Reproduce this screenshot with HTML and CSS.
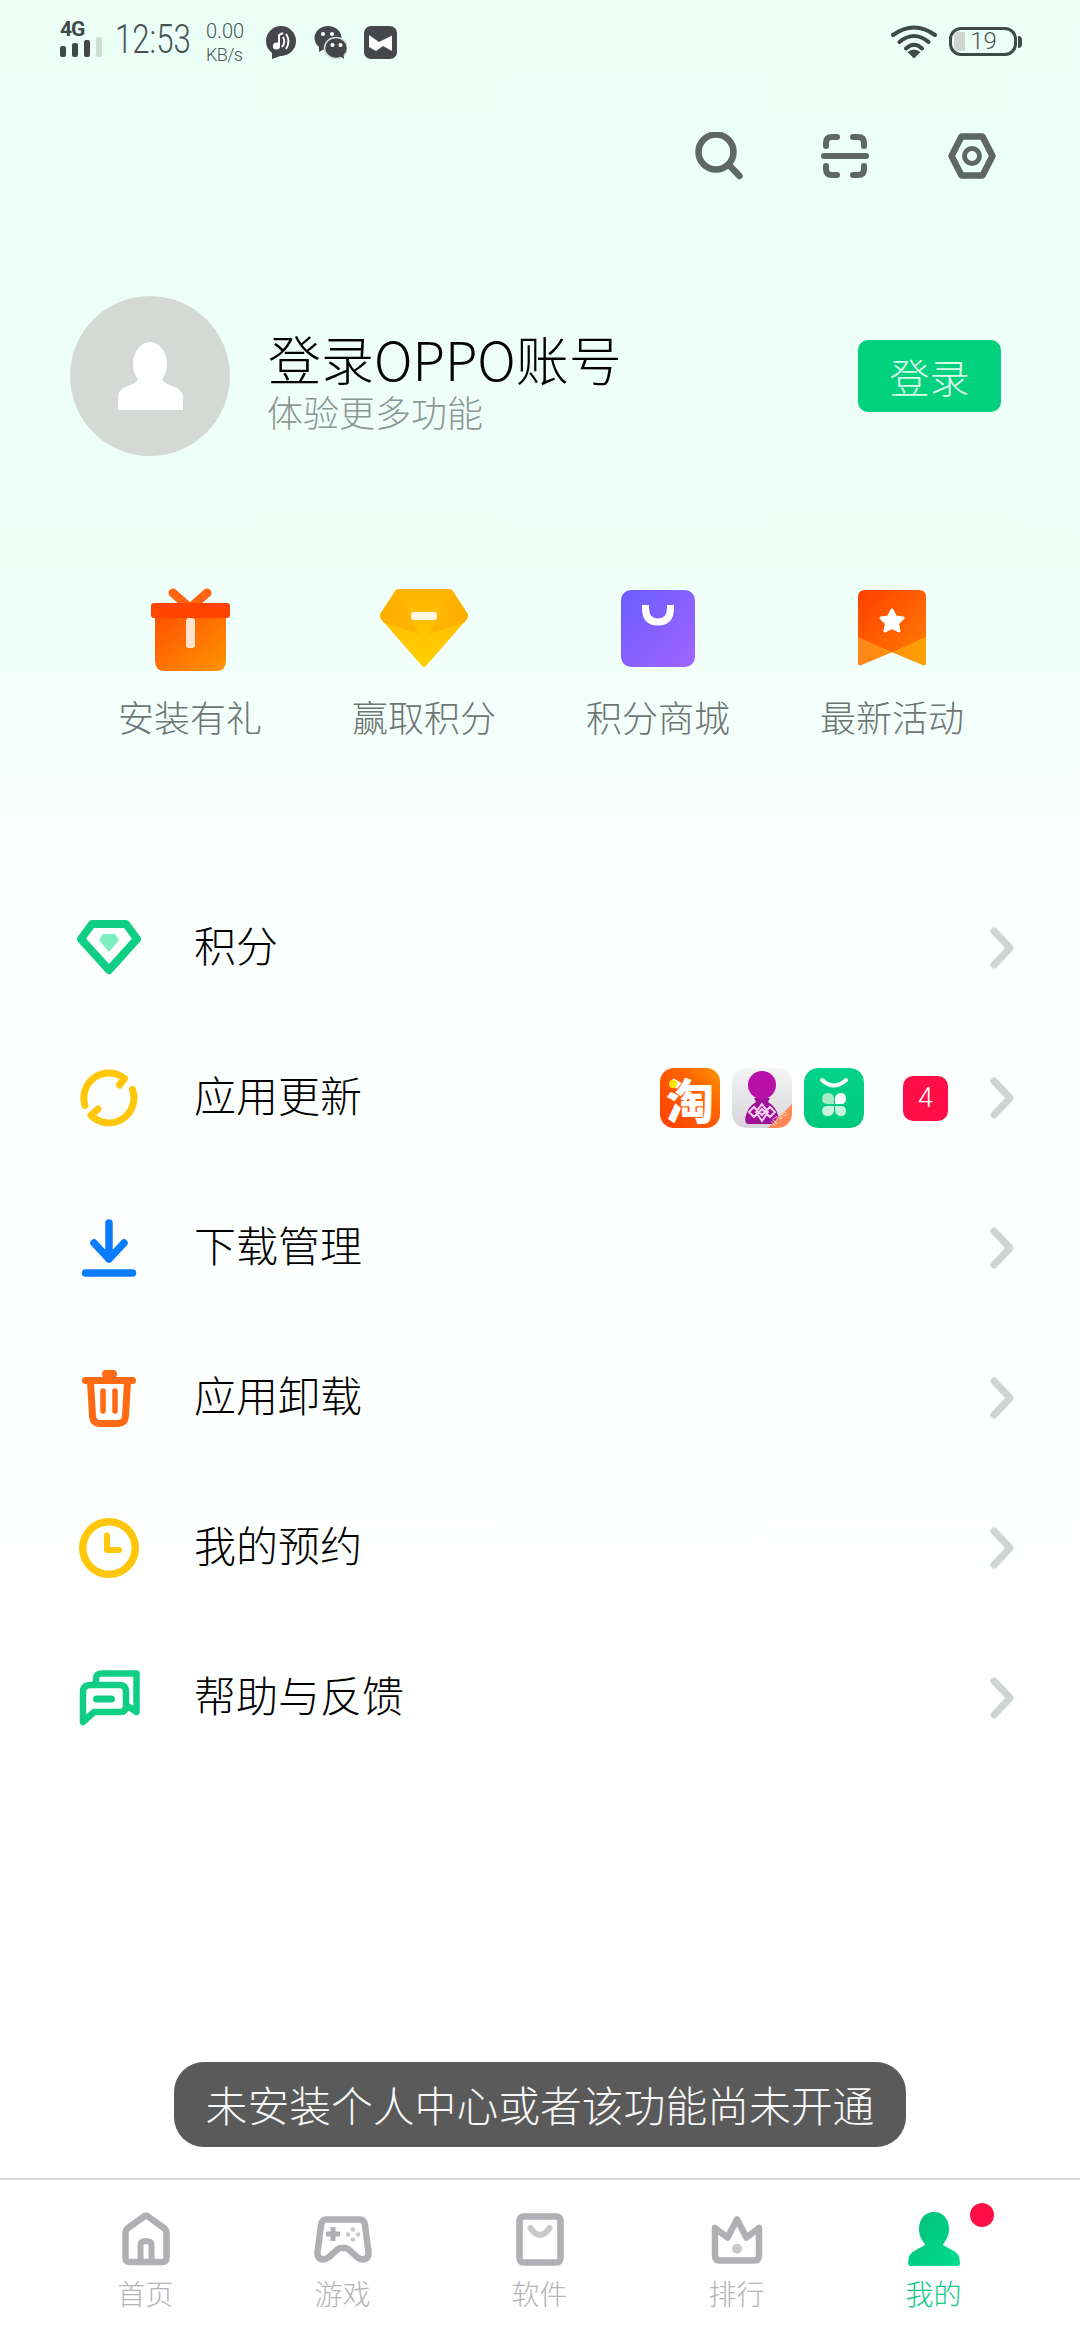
FILE: index.html
```html
<!DOCTYPE html>
<html lang="zh-CN">
<head>
    <meta charset="UTF-8">
    <meta name="viewport" content="width=device-width, initial-scale=1.0">
    <title>我的</title>
    <link rel="stylesheet" href="styles.css">
</head>
<body>
    <main class="page">
        <div class="status-bar">
            <div class="signal">
                <span class="signal-type">4G</span>
                <div class="signal-bars">
                    <i class="bar bar-1"></i><i class="bar bar-2"></i><i class="bar bar-3"></i><i class="bar bar-4"></i>
                </div>
            </div>
            <div class="clock"><span>12:53</span></div>
            <div class="speed"><span>0.00</span><span class="speed-unit">KB/s</span></div>
            <svg class="note-icon" width="30" height="33" viewBox="0 0 30 33">
                <circle cx="15" cy="15" r="15" fill="#45474b"/>
                <path d="M6 25 L6 33 L20 28Z" fill="#45474b"/>
                <circle cx="10.5" cy="20" r="3.6" fill="#fff"/>
                <path d="M13 20 V9 L17 7" stroke="#fff" stroke-width="2" fill="none"/>
                <path d="M17 11 Q20 16 16 21 M20 8 Q25 15 20 23" stroke="#fff" stroke-width="2" fill="none"/>
            </svg>
            <svg class="wechat-icon" width="33" height="33" viewBox="0 0 33 33">
                <ellipse cx="14" cy="12" rx="13.5" ry="12" fill="#45474b"/>
                <path d="M5 20 L5 26 L12 22Z" fill="#45474b"/>
                <circle cx="9" cy="8" r="2" fill="#fff"/>
                <circle cx="18" cy="8" r="2" fill="#fff"/>
                <ellipse cx="22" cy="22" rx="11.5" ry="10.5" fill="#45474b" stroke="#cfd8d4" stroke-width="1.5"/>
                <path d="M26 30 L30 33 L29.5 28Z" fill="#45474b"/>
                <circle cx="18.5" cy="19" r="2" fill="#fff"/>
                <circle cx="26.5" cy="19" r="2" fill="#fff"/>
            </svg>
            <svg class="map-icon" width="33" height="33" viewBox="0 0 33 33">
                <rect width="33" height="33" rx="7" fill="#45474b"/>
                <path d="M5 9 L15 16 L28 9.5 V25 L19 20 L12 25 L5 21Z" fill="#fff"/>
            </svg>
            <svg class="wifi-icon" width="46" height="34" viewBox="0 0 46 34">
                <path d="M2 10 Q23 -5 44 10 M8.5 17 Q23 5 37.5 17 M15 23.5 Q23 16 31 23.5" stroke="#3f4a48" stroke-width="4" stroke-linecap="round" fill="none"/>
                <path d="M16.5 27 Q23 22 29.5 27 L23 33.5Z" fill="#3f4a48"/>
            </svg>
            <div class="battery">
                <div class="battery-body">
                    <i class="battery-level"></i>
                    <span class="battery-text">19</span>
                </div>
                <i class="battery-tip"></i>
            </div>
        </div>

        <div class="top-actions">
            <svg width="48" height="48" viewBox="0 0 48 48" fill="none" stroke="#5f6764">
                <circle cx="21" cy="20" r="17.5" stroke-width="6.5"/>
                <path d="M34 33 L44.5 44" stroke-width="6.5" stroke-linecap="round"/>
            </svg>
            <svg width="48" height="48" viewBox="0 0 48 48" fill="none" stroke="#5f6764" stroke-width="6" stroke-linecap="round">
                <path d="M3 24 H45"/>
                <path d="M5 14 V11 Q5 5 11 5 H16 M32 5 H37 Q43 5 43 11 V14 M5 34 V37 Q5 43 11 43 H16 M32 43 H37 Q43 43 43 37 V34"/>
            </svg>
            <svg width="50" height="48" viewBox="0 0 50 48" fill="none" stroke="#5f6764">
                <path d="M4.5 24 L14.5 4.5 H35.5 L45.5 24 L35.5 43.5 H14.5Z" stroke-width="6.5" stroke-linejoin="round"/>
                <circle cx="25" cy="24" r="7.5" stroke-width="5"/>
            </svg>
        </div>

        <section class="profile">
            <div class="avatar">
                <svg width="160" height="160" viewBox="0 0 160 160" fill="#fff">
                    <ellipse cx="80" cy="68" rx="17" ry="22"/>
                    <path d="M48 114 V101 Q48 93 58 90 Q70 86 70 78 H90 Q90 86 102 90 Q113 93 113 101 V114Z"/>
                </svg>
            </div>
            <div class="profile-text">
                <div class="profile-title">登录OPPO账号</div>
                <div class="profile-sub">体验更多功能</div>
            </div>
            <div class="login-button">登录</div>
        </section>

        <section class="shortcuts">
            <div class="shortcut">
                <div class="shortcut-icon">
                    <svg width="79" height="83" viewBox="0 0 79 83">
                        <defs>
                            <linearGradient id="giftBody" x1="0" y1="0" x2="1" y2="1">
                                <stop offset="0" stop-color="#ff5200"/>
                                <stop offset="1" stop-color="#ff9400"/>
                            </linearGradient>
                        </defs>
                        <path d="M22 5 L39 20 M56 5 L39 20" stroke="#ff6510" stroke-width="9" stroke-linecap="round"/>
                        <path d="M4 28 H75 V73 Q75 83 65 83 H14 Q4 83 4 73Z" fill="url(#giftBody)"/>
                        <rect y="15" width="79" height="15" rx="3" fill="#ff4300"/>
                        <rect x="35" y="30" width="9" height="30" rx="3" fill="#ffe3cf"/>
                    </svg>
                </div>
                <span class="shortcut-label">安装有礼</span>
            </div>
            <div class="shortcut">
                <div class="shortcut-icon">
                    <svg width="90" height="83" viewBox="0 0 90 83">
                        <defs>
                            <linearGradient id="gemBody" x1="0" y1="0" x2="0" y2="1">
                                <stop offset="0" stop-color="#ffb400"/>
                                <stop offset="1" stop-color="#ffd000"/>
                            </linearGradient>
                            <linearGradient id="gemLeft" x1="0" y1="0" x2="1" y2="0">
                                <stop offset="0" stop-color="#ffac00"/>
                                <stop offset="1" stop-color="#ffb600"/>
                            </linearGradient>
                            <linearGradient id="gemRight" x1="1" y1="0" x2="0" y2="0">
                                <stop offset="0" stop-color="#ffac00"/>
                                <stop offset="1" stop-color="#ffb600"/>
                            </linearGradient>
                        </defs>
                        <path d="M20 1 H70 Q73 1 74 3 L89 26 Q90 29 88 31 L47 78 Q45 80 43 78 L2 31 Q0 29 1 26 L16 3 Q17 1 20 1Z" fill="url(#gemBody)"/>
                        <path d="M18 1.500 L1 28 L4 34 L40 46Z" fill="url(#gemLeft)"/>
                        <path d="M72 1.500 L89 28 L86 34 L50 46Z" fill="url(#gemRight)"/>
                        <rect x="32" y="24" width="26" height="8" rx="2" fill="#fff6e0"/>
                    </svg>
                </div>
                <span class="shortcut-label">赢取积分</span>
            </div>
            <div class="shortcut">
                <div class="shortcut-icon">
                    <svg width="74" height="83" viewBox="0 0 74 83">
                        <defs>
                            <linearGradient id="bagBody" x1="0" y1="0" x2="1" y2="1">
                                <stop offset="0" stop-color="#6a5cff"/>
                                <stop offset="1" stop-color="#a265ff"/>
                            </linearGradient>
                        </defs>
                        <rect y="2" width="74" height="77" rx="10" fill="url(#bagBody)"/>
                        <path d="M24.500 17 V20 Q24.500 34 37 34 Q49.500 34 49.500 20 V17" stroke="#fff" stroke-width="7" fill="none"/>
                    </svg>
                </div>
                <span class="shortcut-label">积分商城</span>
            </div>
            <div class="shortcut">
                <div class="shortcut-icon">
                    <svg width="68" height="83" viewBox="0 0 68 83">
                        <defs>
                            <linearGradient id="markBody" x1="0" y1="0" x2="1" y2="1">
                                <stop offset="0" stop-color="#ff3f00"/>
                                <stop offset="1" stop-color="#ff8000"/>
                            </linearGradient>
                            <linearGradient id="markFold" x1="0" y1="0" x2="1" y2="0">
                                <stop offset="0" stop-color="#ff8518"/>
                                <stop offset="1" stop-color="#ffa000"/>
                            </linearGradient>
                        </defs>
                        <path d="M0 9 Q0 2 7 2 H61 Q68 2 68 9 V74 Q68 78 65 77 L34 64 L3 77 Q0 78 0 74Z" fill="url(#markBody)"/>
                        <path d="M0 49 L34 64 L68 49 V74 Q68 78 65 77 L34 64 L3 77 Q0 78 0 74Z" fill="url(#markFold)"/>
                        <path d="M34 22 L37.500 29 L45 30 L39.500 35.500 L41 43 L34 39.500 L27 43 L28.500 35.500 L23 30 L30.500 29Z" fill="#fff" stroke="#fff" stroke-width="3" stroke-linejoin="round"/>
                    </svg>
                </div>
                <span class="shortcut-label">最新活动</span>
            </div>
        </section>

        <section class="menu">
            <div class="menu-row">
                <div class="menu-icon">
                    <svg width="66" height="56" viewBox="0 0 66 56">
                        <path d="M16 4 H50 L61 19 L33 50 L5 19Z" fill="none" stroke="#10cf85" stroke-width="8" stroke-linejoin="round"/>
                        <path d="M27 14 H39 L43 20 L33 32 L23 20Z" fill="#7deec0"/>
                    </svg>
                </div>
                <span class="menu-text">积分</span>
                <svg class="chevron" width="24" height="42" viewBox="0 0 24 42"><path d="M4 4 L20 21 L4 38"/></svg>
            </div>
            <div class="menu-row">
                <div class="menu-icon">
                    <svg width="66" height="66" viewBox="0 0 66 66" fill="none" stroke="#ffc60a" stroke-width="7" stroke-linecap="round" stroke-linejoin="round">
                        <path d="M9 40.500 A25 25 0 0 1 48.500 13.500 L43.500 20"/>
                        <path d="M56.500 24.500 A25 25 0 0 1 15 50.300 L22 44"/>
                    </svg>
                </div>
                <span class="menu-text">应用更新</span>
                <div class="update-apps">
                    <div class="app-icon app-taobao"><i class="taobao-dot"></i><span>淘</span></div>
                    <svg class="app-icon" width="60" height="60" viewBox="0 0 60 60">
                        <defs>
                            <linearGradient id="unicomBg" x1="0" y1="0" x2="0" y2="1">
                                <stop offset="0" stop-color="#f5f4f6"/>
                                <stop offset="1" stop-color="#d6d6da"/>
                            </linearGradient>
                            <clipPath id="unicomClip"><rect width="60" height="60" rx="14"/></clipPath>
                        </defs>
                        <g clip-path="url(#unicomClip)">
                            <rect width="60" height="60" fill="url(#unicomBg)"/>
                            <path d="M15 56 Q12 54 14 47 Q16 39 24 34 L22 30 H38 L36 34 Q44 39 46 47 Q49 54 46 56Z" fill="#a00f98"/>
                            <circle cx="30" cy="17" r="14" fill="#b80fa6"/>
                            <path d="M17 44 L22 39 L30 47 L38 39 L43 44 L38 49 L30 41 L22 49Z M30 36 L36 44 L30 53 L24 44Z" fill="none" stroke="#f7cff4" stroke-width="2"/>
                            <path d="M60 36 V60 H36Z" fill="#ff8a55"/>
                            <text class="ipv6" x="49" y="52" transform="rotate(-45 49 52)">IPV6</text>
                        </g>
                    </svg>
                    <svg class="app-icon" width="60" height="60" viewBox="0 0 60 60">
                        <defs>
                            <linearGradient id="marketBg" x1="0" y1="0" x2="0" y2="1">
                                <stop offset="0" stop-color="#04d28c"/>
                                <stop offset="1" stop-color="#00c97a"/>
                            </linearGradient>
                        </defs>
                        <rect width="60" height="60" rx="14" fill="url(#marketBg)"/>
                        <path d="M18 12 Q30 23 42 12" stroke="#fff" stroke-width="4" stroke-linecap="round" fill="none"/>
                        <path d="M30 36 H24 Q18 36 18 31 Q18 25 24 25 Q29 25 30 30Z" fill="#a5ecc7"/>
                        <path d="M31 36 V30 Q32 25 37 25 Q42 25 42 31 Q42 36 37 36Z" fill="#fff"/>
                        <path d="M30 38 V43 Q29 48 24 48 Q18 48 18 43 Q18 38 24 38Z" fill="#c8f4dc"/>
                        <path d="M31 38 H37 Q42 38 42 43 Q42 48 37 48 Q32 48 31 43Z" fill="#c8f4dc"/>
                    </svg>
                </div>
                <span class="count-badge">4</span>
                <svg class="chevron" width="24" height="42" viewBox="0 0 24 42"><path d="M4 4 L20 21 L4 38"/></svg>
            </div>
            <div class="menu-row">
                <div class="menu-icon">
                    <svg width="56" height="58" viewBox="0 0 56 58" fill="none" stroke="#0a7cff" stroke-linecap="round" stroke-linejoin="round">
                        <path d="M28 4 V40 M13 24 L28 40 L43 24" stroke-width="7.500"/>
                        <path d="M4.500 54 H51.500" stroke-width="7.500"/>
                    </svg>
                </div>
                <span class="menu-text">下载管理</span>
                <svg class="chevron" width="24" height="42" viewBox="0 0 24 42"><path d="M4 4 L20 21 L4 38"/></svg>
            </div>
            <div class="menu-row">
                <div class="menu-icon">
                    <svg width="54" height="57" viewBox="0 0 54 57" fill="none" stroke="#ff6a13" stroke-linecap="round">
                        <rect x="20" width="15" height="8" rx="4" fill="#ff6a13" stroke="none"/>
                        <path d="M3.500 10.500 H50.500" stroke-width="7"/>
                        <path d="M8.500 12 L10.500 46 Q11 53.500 18 53.500 H36 Q43 53.500 43.500 46 L45.500 12" stroke-width="7"/>
                        <path d="M21 21 V41 M33 21 V41" stroke-width="5.500"/>
                    </svg>
                </div>
                <span class="menu-text">应用卸载</span>
                <svg class="chevron" width="24" height="42" viewBox="0 0 24 42"><path d="M4 4 L20 21 L4 38"/></svg>
            </div>
            <div class="menu-row">
                <div class="menu-icon">
                    <svg width="60" height="60" viewBox="0 0 60 60" fill="none" stroke="#ffc60a">
                        <circle cx="30" cy="30" r="26.250" stroke-width="7.500"/>
                        <path d="M28 17.500 V32 H40" stroke-width="6" stroke-linecap="round" stroke-linejoin="round"/>
                    </svg>
                </div>
                <span class="menu-text">我的预约</span>
                <svg class="chevron" width="24" height="42" viewBox="0 0 24 42"><path d="M4 4 L20 21 L4 38"/></svg>
            </div>
            <div class="menu-row">
                <div class="menu-icon">
                    <svg width="61" height="56" viewBox="0 0 61 56" fill="none" stroke="#10cf85" stroke-width="6.500" stroke-linejoin="round">
                        <path d="M17 14 V9 Q17 3.500 23 3.500 H57.500 V42 L47 35"/>
                        <path d="M4 52 V22 Q4 15 11 15 H41 Q47 15 47 22 V36 Q47 42 41 42 H15Z"/>
                        <path d="M17.500 29 H32.500" stroke-width="7" stroke-linecap="round"/>
                    </svg>
                </div>
                <span class="menu-text">帮助与反馈</span>
                <svg class="chevron" width="24" height="42" viewBox="0 0 24 42"><path d="M4 4 L20 21 L4 38"/></svg>
            </div>
        </section>

        <div class="toast">未安装个人中心或者该功能尚未开通</div>
    </main>

    <nav class="tab-bar">
        <div class="tab">
            <svg width="48" height="54" viewBox="0 0 48 54" fill="none" stroke="#b0b0b4" stroke-width="6.500">
                <path d="M3.500 21 Q3.500 18 6 16 L22 4.500 Q24 3 26 4.500 L42 16 Q44.500 18 44.500 21 V46 Q44.500 50 40 50 H8 Q3.500 50 3.500 46Z" stroke-linejoin="round"/>
                <path d="M18.500 48 V33 Q18.500 29 24 29 Q29.500 29 29.500 33 V48" stroke-width="6"/>
            </svg>
            <span class="tab-label">首页</span>
        </div>
        <div class="tab">
            <svg width="58" height="54" viewBox="0 0 58 54" fill="none">
                <path d="M12 7.500 H46 Q50 7.500 51 13 L54.500 40 Q55 47 49 47.500 Q46 47.500 43 45 L34 37 Q33 36 31 36 H27 Q25 36 24 37 L15 45 Q12 47.500 9 47.500 Q3 47 3.500 40 L7 13 Q8 7.500 12 7.500Z" stroke="#b0b0b4" stroke-width="6.500"/>
                <path d="M12 22 H26 M19 15 V29" stroke="#b0b0b4" stroke-width="5"/>
                <g fill="#c9c9cc">
                    <circle cx="39" cy="17.500" r="2.300"/>
                    <circle cx="39" cy="27.500" r="2.300"/>
                    <circle cx="34" cy="22.500" r="2.300"/>
                    <circle cx="44" cy="22.500" r="2.300"/>
                </g>
            </svg>
            <span class="tab-label">游戏</span>
        </div>
        <div class="tab">
            <svg width="48" height="54" viewBox="0 0 48 54" fill="none">
                <rect x="3.500" y="4.500" width="41" height="46" rx="4" stroke="#b0b0b4" stroke-width="6.500"/>
                <path d="M14.500 16 Q24 30 33.500 16" stroke="#c9c9cc" stroke-width="6" stroke-linecap="round"/>
            </svg>
            <span class="tab-label">软件</span>
        </div>
        <div class="tab">
            <svg width="52" height="54" viewBox="0 0 52 54" fill="none">
                <path d="M4 16 L16.500 25.500 L26 7.500 L35.500 25.500 L48 16 V43 Q48 48.500 43 48.500 H9 Q4 48.500 4 43Z" stroke="#b0b0b4" stroke-width="6.500" stroke-linejoin="round"/>
                <circle cx="26" cy="36.700" r="5" fill="#c9c9cc"/>
            </svg>
            <span class="tab-label">排行</span>
        </div>
        <div class="tab tab-active">
            <svg width="52" height="54" viewBox="0 0 52 54">
                <defs>
                    <linearGradient id="meBody" x1="0" y1="0" x2="1" y2="1">
                        <stop offset="0" stop-color="#03bd79"/>
                        <stop offset="1" stop-color="#00de8e"/>
                    </linearGradient>
                </defs>
                <path d="M26 0 C36 0 41 8 41 17 C41 26 36 30 35 33 L44 38 Q52 41 52 51 Q52 54 49 54 H3 Q0 54 0 51 Q0 41 8 38 L17 33 C16 30 11 26 11 17 C11 8 16 0 26 0Z" fill="url(#meBody)"/>
            </svg>
            <span class="tab-label">我的</span>
            <i class="tab-dot"></i>
        </div>
    </nav>
</body>
</html>
```

FILE: styles.css
```css
* {
    box-sizing: border-box;
}

html, body {
    margin: 0;
    padding: 0;
}

body {
    width: 1080px;
    height: 2340px;
    display: flex;
    flex-direction: column;
    overflow: hidden;
    font-family: "Noto Sans CJK SC", "Noto Sans", sans-serif;
    font-weight: 300;
    color: #000;
    background: #fff;
}

svg {
    display: block;
    flex-shrink: 0;
}

.page {
    position: relative;
    flex: 1;
    background: linear-gradient(#ebfff7 0, #eefff8 560px, #f4fffb 740px, #fbfffd 900px, #fdfffe 1500px, #fff 1800px);
}

/* status bar */
.status-bar {
    display: flex;
    align-items: flex-start;
    height: 84px;
    padding: 22px 0 0 60px;
    color: #4a5452;
    font-family: Roboto, sans-serif;
}

.signal {
    width: 42px;
    margin-right: 13px;
}

.signal-type {
    display: block;
    height: 15px;
    font-size: 21px;
    line-height: 15px;
    font-weight: 700;
    color: #3f4a48;
    letter-spacing: -1px;
}

.signal-bars {
    display: flex;
    align-items: flex-end;
    gap: 6px;
    height: 20px;
}

.bar {
    width: 6px;
    border-radius: 2px;
    background: #3f4a48;
}

.bar-1 { height: 11px; }
.bar-2 { height: 14px; }
.bar-3 { height: 17px; }
.bar-4 { height: 20px; background: #cfdcd6; }

.clock {
    width: 91px;
    margin-top: -2px;
    font-size: 40px;
    line-height: 40px;
    font-weight: 300;
}

.clock span {
    display: inline-block;
    transform: scaleX(0.78);
    transform-origin: left center;
}

.speed {
    display: flex;
    flex-direction: column;
    width: 60px;
    margin-top: -3px;
    font-size: 20px;
    line-height: 24px;
    font-weight: 300;
}

.speed-unit {
    font-size: 18px;
    letter-spacing: -0.6px;
}

.note-icon {
    margin-top: 4px;
}

.wechat-icon {
    margin: 4px 0 0 18px;
}

.map-icon {
    margin: 4px 0 0 17px;
}

.wifi-icon {
    margin: 3px 0 0 494px;
}

.battery {
    display: flex;
    align-items: center;
    margin: 5px 0 0 12px;
}

.battery-body {
    display: flex;
    align-items: center;
    width: 68px;
    height: 29px;
    padding: 2px;
    border: 3px solid #3f4a48;
    border-radius: 12px;
}

.battery-level {
    width: 11px;
    height: 19px;
    background: #cfd5d1;
    border-radius: 4px 0 0 4px;
}

.battery-text {
    flex: 1;
    padding-right: 10px;
    text-align: center;
    font-size: 24px;
    line-height: 19px;
    font-weight: 300;
}

.battery-tip {
    width: 4px;
    height: 12px;
    margin-left: 1px;
    background: #3f4a48;
    border-radius: 0 4px 4px 0;
}

/* search, scan, settings */
.top-actions {
    display: flex;
    justify-content: flex-end;
    gap: 78px;
    margin-top: 48px;
    padding-right: 83px;
}

/* profile */
.profile {
    display: flex;
    align-items: center;
    margin-top: 116px;
    padding: 0 79px 0 70px;
}

.avatar {
    width: 160px;
    height: 160px;
    border-radius: 50%;
    background: #d5d9d6;
}

.profile-text {
    flex: 1;
    margin-left: 38px;
    padding-top: 8px;
}

.profile-title {
    font-size: 53px;
    line-height: 62px;
}

.profile-sub {
    margin-left: -1px;
    font-size: 36px;
    line-height: 44px;
    color: #8d9693;
}

.login-button {
    display: flex;
    align-items: center;
    justify-content: center;
    width: 143px;
    height: 72px;
    border-radius: 10px;
    background: #02d27e;
    color: #d8fbe9;
    font-size: 40px;
}

/* four shortcuts */
.shortcuts {
    display: grid;
    grid-template-columns: repeat(4, 234px);
    margin-top: 132px;
    padding-left: 73px;
}

.shortcut {
    display: flex;
    flex-direction: column;
    align-items: center;
}

.shortcut-icon {
    height: 83px;
}

.shortcut-label {
    margin-top: 21px;
    font-size: 36px;
    line-height: 48px;
    color: #6d7673;
}

/* menu list */
.menu {
    margin-top: 133px;
}

.menu-row {
    display: flex;
    align-items: center;
    height: 150px;
    padding: 0 66px 0 69px;
}

.menu-icon {
    display: flex;
    justify-content: center;
    width: 80px;
    margin-right: 45px;
}

.menu-text {
    flex: 1;
    padding-bottom: 8px;
    font-size: 42px;
    line-height: 56px;
}

.update-apps {
    display: flex;
    gap: 12px;
}

.app-icon {
    width: 60px;
    height: 60px;
    border-radius: 14px;
}

.app-taobao {
    position: relative;
    display: flex;
    align-items: center;
    justify-content: center;
    background: linear-gradient(45deg, #ff4000, #ff6000 60%, #ff9000);
    color: #fff;
    font-size: 48px;
    font-weight: 900;
    line-height: 60px;
}

.taobao-dot {
    position: absolute;
    left: 9px;
    top: 12px;
    width: 8px;
    height: 8px;
    border-radius: 50%;
    background: #ffe600;
}

.ipv6 {
    font-family: Roboto, sans-serif;
    font-size: 9px;
    fill: #ffe9dc;
    text-anchor: middle;
}

.count-badge {
    display: flex;
    align-items: center;
    justify-content: center;
    width: 45px;
    height: 45px;
    margin: 0 42px 0 39px;
    border-radius: 10px;
    background: #ff0f45;
    color: #fff;
    font-family: Roboto, sans-serif;
    font-size: 27px;
    font-weight: 300;
}

.chevron path {
    fill: none;
    stroke: #cdd4d1;
    stroke-width: 7;
    stroke-linecap: round;
    stroke-linejoin: round;
}

/* toast over the list */
.toast {
    position: absolute;
    left: 174px;
    right: 174px;
    bottom: 31px;
    height: 85px;
    border-radius: 30px;
    background: #5a5a5a;
    color: #f7f7f7;
    font-size: 41.8px;
    line-height: 85px;
    text-align: center;
}

/* bottom tabs */
.tab-bar {
    display: grid;
    grid-template-columns: repeat(5, 197px);
    height: 162px;
    padding: 32px 0 0 47px;
    border-top: 2px solid #ddd;
    background: #fff;
}

.tab {
    position: relative;
    display: flex;
    flex-direction: column;
    align-items: center;
}

.tab-label {
    margin-top: 8px;
    font-size: 28px;
    line-height: 38px;
    color: #b4b4b6;
}

.tab-active .tab-label {
    color: #10c785;
}

.tab-dot {
    position: absolute;
    left: 135px;
    top: -9px;
    width: 24px;
    height: 24px;
    border-radius: 50%;
    background: #ff0f45;
}
```
